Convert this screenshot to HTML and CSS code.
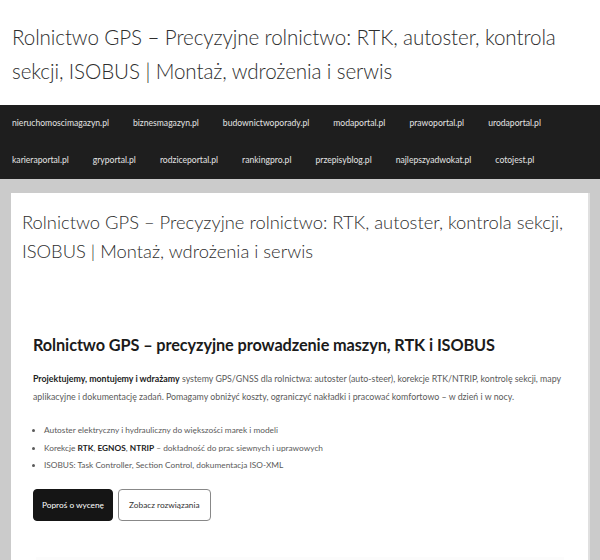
FILE: index.html
```html
<!DOCTYPE html>
<html lang="pl">
<head>
<meta charset="utf-8">
<title>Rolnictwo GPS</title>
<link rel="stylesheet" href="styles.css">
</head>
<body>
<header class="site-header">
  <p class="site-title">Rolnictwo GPS – Precyzyjne rolnictwo: RTK, autoster, kontrola sekcji, ISOBUS | Montaż, wdrożenia i serwis</p>
</header>
<nav class="site-nav">
  <ul class="nav-list">
    <li><a href="#">nieruchomoscimagazyn.pl</a></li>
    <li><a href="#">biznesmagazyn.pl</a></li>
    <li><a href="#">budownictwoporady.pl</a></li>
    <li><a href="#">modaportal.pl</a></li>
    <li><a href="#">prawoportal.pl</a></li>
    <li><a href="#">urodaportal.pl</a></li>
    <li class="break"></li>
    <li><a href="#">karieraportal.pl</a></li>
    <li><a href="#">gryportal.pl</a></li>
    <li><a href="#">rodziceportal.pl</a></li>
    <li><a href="#">rankingpro.pl</a></li>
    <li><a href="#">przepisyblog.pl</a></li>
    <li><a href="#">najlepszyadwokat.pl</a></li>
    <li><a href="#">cotojest.pl</a></li>
  </ul>
</nav>
<main class="site-main">
  <article class="card">
    <h1 class="card-title">Rolnictwo GPS – Precyzyjne rolnictwo: RTK, autoster, kontrola sekcji, ISOBUS | Montaż, wdrożenia i serwis</h1>
    <section class="hero">
      <h2 class="hero-title">Rolnictwo GPS – precyzyjne prowadzenie maszyn, RTK i ISOBUS</h2>
      <p class="hero-text"><strong>Projektujemy, montujemy i wdrażamy</strong> systemy GPS/GNSS dla rolnictwa: autoster (auto-steer), korekcje RTK/NTRIP, kontrolę sekcji, mapy aplikacyjne i dokumentację zadań. Pomagamy obniżyć koszty, ograniczyć nakładki i pracować komfortowo – w dzień i w nocy.</p>
      <ul class="hero-list">
        <li>Autoster elektryczny i hydrauliczny do większości marek i modeli</li>
        <li>Korekcje <strong>RTK</strong>, <strong>EGNOS</strong>, <strong>NTRIP</strong> – dokładność do prac siewnych i uprawowych</li>
        <li>ISOBUS: Task Controller, Section Control, dokumentacja ISO-XML</li>
      </ul>
      <div class="actions">
        <a class="btn btn-dark" href="#">Poproś o wycenę</a>
        <a class="btn btn-outline" href="#">Zobacz rozwiązania</a>
      </div>
    </section>
    <div class="next-box"></div>
  </article>
</main>
</body>
</html>
```

FILE: styles.css
```css
* { box-sizing: border-box; }
html, body { margin: 0; padding: 0; }
body {
  background: #cbcbcb;
  font-family: "Lato", "Open Sans", sans-serif;
  color: #222;
}
a { text-decoration: none; color: inherit; }

.site-header {
  background: #fff;
  padding: 20px 12px 17px;
}
.site-title {
  margin: 0;
  font-size: 20.6px;
  line-height: 34px;
  font-weight: 300;
  color: #2e2e2e;
  letter-spacing: -0.1px;
}

.site-nav {
  background: #1e1e1e;
}
.nav-list {
  list-style: none;
  margin: 0;
  padding: 0;
  display: flex;
  flex-wrap: wrap;
}
.nav-list .break {
  flex-basis: 100%;
  height: 0;
}
.nav-list li a {
  display: block;
  padding: 0 12px;
  line-height: 37px;
  font-size: 8.6px;
  color: #e4e4e4;
}

.site-main {
  padding: 14px 10px 0 11px;
}
.card {
  background: #fff;
  padding: 15px 12px 0 11px;
  border-right: 2px solid #e0e0e0;
}
.card-title {
  margin: 0;
  font-size: 18.35px;
  line-height: 29px;
  font-weight: 300;
  color: #2e2e2e;
}
.hero {
  padding: 67px 11px 36px;
}
.hero-title {
  margin: 0 0 13px;
  font-size: 16.3px;
  line-height: 24px;
  font-weight: 700;
  color: #1b1b1b;
  letter-spacing: -0.1px;
}
.hero-text {
  margin: 0 0 16px;
  font-size: 8.8px;
  line-height: 18px;
  color: #5a5a5a;
}
.hero-text strong, .hero-list strong { color: #222; }
.hero-list {
  margin: 0 0 14px;
  padding-left: 11px;
  font-size: 8.3px;
  line-height: 17.5px;
  color: #5a5a5a;
}
.actions {
  display: flex;
  gap: 5px;
}
.btn {
  display: inline-block;
  font-size: 8.3px;
  line-height: 30px;
  padding: 0 8px;
  border-radius: 4px;
}
.btn-dark {
  background: #151515;
  color: #fff;
  border: 1px solid #151515;
}
.btn-outline {
  background: #fff;
  color: #333;
  border: 1px solid #888;
  padding: 0 10px;
}
.next-box {
  height: 10px;
  margin: 0 12px 0 14px;
  background: #fcfcfc;
}
```
